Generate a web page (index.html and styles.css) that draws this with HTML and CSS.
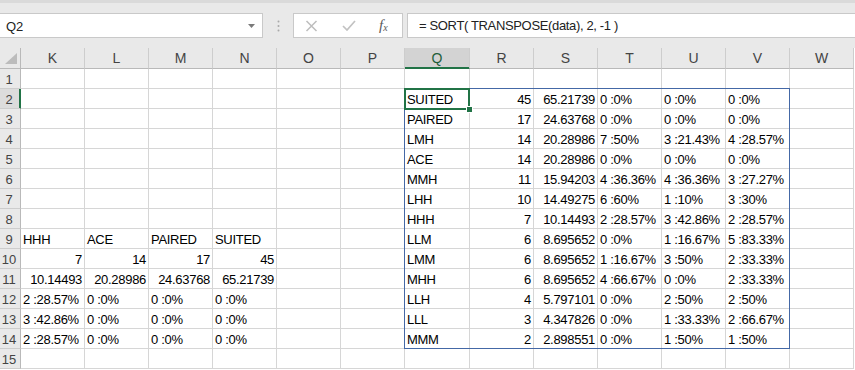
FILE: index.html
```html
<!DOCTYPE html>
<html lang="en">
<head>
  <meta charset="UTF-8" />
  <title>Sheet1 - Excel</title>
  <link rel="stylesheet" href="styles.css">
</head>
<body>
  <!-- formula bar -->
  <div class="formula-bar">
    <div class="name-box">
      <span>Q2</span>
      <svg class="drop-arrow" width="7" height="4" viewBox="0 0 7 4"><polygon points="0,0 7,0 3.5,4" fill="#7a7a7a"/></svg>
    </div>
    <svg class="grip" width="3" height="12" viewBox="0 0 3 12">
      <circle cx="1.5" cy="1.5" r="1" fill="#a9a9a9"/>
      <circle cx="1.5" cy="6" r="1" fill="#a9a9a9"/>
      <circle cx="1.5" cy="10.5" r="1" fill="#a9a9a9"/>
    </svg>
    <div class="fx-box">
      <svg class="btn-cancel" width="13" height="12" viewBox="0 0 13 12">
        <path d="M1.5 1 L11.5 11 M11.5 1 L1.5 11" stroke="#bdbdbd" stroke-width="1.5" fill="none"/>
      </svg>
      <svg class="btn-enter" width="14" height="11" viewBox="0 0 14 11">
        <path d="M1 6 L5 10 L13 1" stroke="#c2c2c2" stroke-width="1.7" fill="none"/>
      </svg>
      <span class="fx"><i>f</i><sub>x</sub></span>
    </div>
    <div class="formula">= SORT( TRANSPOSE(data), 2, -1 )</div>
  </div>

  <!-- grid -->
  <div class="sheet-wrap">
    <table class="sheet">
      <colgroup>
        <col class="col-rh">
        <col><col><col><col><col><col>
        <col class="col-q">
        <col><col><col><col><col><col>
      </colgroup>
      <tr class="head-row">
        <th class="corner"><svg width="20" height="20" viewBox="0 0 20 20"><polygon points="5,16 17,16 17,5" fill="#bcbcbc"/></svg></th>
        <th>K</th><th>L</th><th>M</th><th>N</th><th>O</th><th>P</th>
        <th class="sel">Q</th>
        <th>R</th><th>S</th><th>T</th><th>U</th><th>V</th><th>W</th>
      </tr>
      <tr>
        <th class="rh">1</th>
        <td></td><td></td><td></td><td></td><td></td><td></td>
        <td></td><td></td><td></td><td></td><td></td><td></td><td></td>
      </tr>
      <tr>
        <th class="rh sel">2</th>
        <td></td><td></td><td></td><td></td><td></td><td></td>
        <td>SUITED</td><td class="n">45</td><td class="n">65.21739</td><td>0 :0%</td><td>0 :0%</td><td>0 :0%</td><td></td>
      </tr>
      <tr>
        <th class="rh">3</th>
        <td></td><td></td><td></td><td></td><td></td><td></td>
        <td>PAIRED</td><td class="n">17</td><td class="n">24.63768</td><td>0 :0%</td><td>0 :0%</td><td>0 :0%</td><td></td>
      </tr>
      <tr>
        <th class="rh">4</th>
        <td></td><td></td><td></td><td></td><td></td><td></td>
        <td>LMH</td><td class="n">14</td><td class="n">20.28986</td><td>7 :50%</td><td>3 :21.43%</td><td>4 :28.57%</td><td></td>
      </tr>
      <tr>
        <th class="rh">5</th>
        <td></td><td></td><td></td><td></td><td></td><td></td>
        <td>ACE</td><td class="n">14</td><td class="n">20.28986</td><td>0 :0%</td><td>0 :0%</td><td>0 :0%</td><td></td>
      </tr>
      <tr>
        <th class="rh">6</th>
        <td></td><td></td><td></td><td></td><td></td><td></td>
        <td>MMH</td><td class="n">11</td><td class="n">15.94203</td><td>4 :36.36%</td><td>4 :36.36%</td><td>3 :27.27%</td><td></td>
      </tr>
      <tr>
        <th class="rh">7</th>
        <td></td><td></td><td></td><td></td><td></td><td></td>
        <td>LHH</td><td class="n">10</td><td class="n">14.49275</td><td>6 :60%</td><td>1 :10%</td><td>3 :30%</td><td></td>
      </tr>
      <tr>
        <th class="rh">8</th>
        <td></td><td></td><td></td><td></td><td></td><td></td>
        <td>HHH</td><td class="n">7</td><td class="n">10.14493</td><td>2 :28.57%</td><td>3 :42.86%</td><td>2 :28.57%</td><td></td>
      </tr>
      <tr>
        <th class="rh">9</th>
        <td>HHH</td><td>ACE</td><td>PAIRED</td><td>SUITED</td><td></td><td></td>
        <td>LLM</td><td class="n">6</td><td class="n">8.695652</td><td>0 :0%</td><td>1 :16.67%</td><td>5 :83.33%</td><td></td>
      </tr>
      <tr>
        <th class="rh">10</th>
        <td class="n">7</td><td class="n">14</td><td class="n">17</td><td class="n">45</td><td></td><td></td>
        <td>LMM</td><td class="n">6</td><td class="n">8.695652</td><td>1 :16.67%</td><td>3 :50%</td><td>2 :33.33%</td><td></td>
      </tr>
      <tr>
        <th class="rh">11</th>
        <td class="n">10.14493</td><td class="n">20.28986</td><td class="n">24.63768</td><td class="n">65.21739</td><td></td><td></td>
        <td>MHH</td><td class="n">6</td><td class="n">8.695652</td><td>4 :66.67%</td><td>0 :0%</td><td>2 :33.33%</td><td></td>
      </tr>
      <tr>
        <th class="rh">12</th>
        <td>2 :28.57%</td><td>0 :0%</td><td>0 :0%</td><td>0 :0%</td><td></td><td></td>
        <td>LLH</td><td class="n">4</td><td class="n">5.797101</td><td>0 :0%</td><td>2 :50%</td><td>2 :50%</td><td></td>
      </tr>
      <tr>
        <th class="rh">13</th>
        <td>3 :42.86%</td><td>0 :0%</td><td>0 :0%</td><td>0 :0%</td><td></td><td></td>
        <td>LLL</td><td class="n">3</td><td class="n">4.347826</td><td>0 :0%</td><td>1 :33.33%</td><td>2 :66.67%</td><td></td>
      </tr>
      <tr>
        <th class="rh">14</th>
        <td>2 :28.57%</td><td>0 :0%</td><td>0 :0%</td><td>0 :0%</td><td></td><td></td>
        <td>MMM</td><td class="n">2</td><td class="n">2.898551</td><td>0 :0%</td><td>1 :50%</td><td>1 :50%</td><td></td>
      </tr>
      <tr>
        <th class="rh">15</th>
        <td></td><td></td><td></td><td></td><td></td><td></td>
        <td></td><td></td><td></td><td></td><td></td><td></td><td></td>
      </tr>
    </table>

    <!-- spill range + active cell, drawn over the grid -->
    <div class="spill"></div>
    <div class="active-cell"><span class="fill-handle"></span></div>
  </div>
</body>
</html>
```

FILE: styles.css
```css
html, body {
  margin: 0;
  padding: 0;
  overflow: hidden;
  background: #ffffff;
  font-family: "Liberation Sans", Arial, sans-serif;
  color: #000;
}

/* formula bar */
.formula-bar {
  display: flex;
  align-items: flex-start;
  height: 48px;
  box-sizing: border-box;
  padding-top: 10px;
  background: #e9e9e9;
  border-top: 3px solid #dadada;
}

.name-box {
  display: flex;
  align-items: center;
  justify-content: space-between;
  width: 263px;
  height: 25px;
  box-sizing: border-box;
  padding: 0 7px 0 6px;
  background: #fff;
  border: 1px solid #c9c9c9;
  border-left: none;
  font-size: 13px;
  color: #222;
}

.name-box span {
  padding-top: 1px;
}

.grip {
  margin: 7px 13px 0 14px;
}

.fx-box {
  display: flex;
  align-items: center;
  width: 110px;
  height: 25px;
  box-sizing: border-box;
  padding-left: 11px;
  background: #fff;
  border: 1px solid #c9c9c9;
}

.btn-enter {
  margin-left: 24px;
}

.fx {
  margin-left: 23px;
  font-family: "Liberation Serif", serif;
  font-size: 15px;
  color: #5a5a5a;
}

.fx sub {
  font-size: 10px;
  font-style: italic;
  vertical-align: -1px;
}

.formula {
  flex: 1;
  height: 25px;
  margin-left: 4px;
  box-sizing: border-box;
  padding: 1px 0 0 11px;
  background: #fff;
  border: 1px solid #c9c9c9;
  border-right: none;
  font-size: 13px;
  line-height: 22px;
  letter-spacing: -0.35px;
  color: #222;
  white-space: nowrap;
}

/* grid */
.sheet-wrap {
  position: relative;
}

.sheet {
  border-collapse: separate;
  border-spacing: 0;
  table-layout: fixed;
  width: 854px;
}

.sheet col { width: 64px; }
.sheet col.col-rh { width: 21px; }
.sheet col.col-q { width: 65px; }

.sheet tr {
  height: 20px;
}

.sheet td {
  box-sizing: border-box;
  padding: 3px 2px 0 2px;
  border-right: 1px solid #d6d6d6;
  border-bottom: 1px solid #d6d6d6;
  font-size: 13px;
  line-height: 15px;
  letter-spacing: -0.3px;
  vertical-align: top;
  white-space: nowrap;
  overflow: hidden;
}

.sheet td.n {
  text-align: right;
}

.head-row {
  height: 21px;
}

.head-row th {
  box-sizing: border-box;
  padding: 0;
  background: #e9e9e9;
  border-right: 1px solid #cdcdcd;
  border-bottom: 1px solid #b9b9b9;
  font-size: 14px;
  font-weight: normal;
  line-height: 20px;
  color: #444;
  vertical-align: top;
}

.head-row th.corner {
  border-right-color: #b9b9b9;
}

.head-row th.corner svg {
  display: block;
}

.head-row th.sel {
  background: #d3d3d3;
  color: #1f5e3a;
  border-bottom-color: #217346;
  box-shadow: inset 0 -1px 0 #217346;
}

.sheet th.rh {
  box-sizing: border-box;
  padding: 3px 2px 0 0;
  background: #e9e9e9;
  border-right: 1px solid #b9b9b9;
  border-bottom: 1px solid #cdcdcd;
  font-size: 13px;
  font-weight: normal;
  line-height: 15px;
  color: #444;
  text-align: center;
  vertical-align: top;
}

.sheet th.rh.sel {
  background: #dcdcdc;
  border-right-color: #217346;
  box-shadow: inset -1px 0 0 #217346;
}

.spill {
  position: absolute;
  left: 404px;
  top: 40px;
  width: 386px;
  height: 261px;
  box-sizing: border-box;
  border: 1px solid #4468a6;
  pointer-events: none;
}

.active-cell {
  position: absolute;
  left: 404px;
  top: 40px;
  width: 66px;
  height: 22px;
  box-sizing: border-box;
  border: 2px solid #217346;
}

.fill-handle {
  position: absolute;
  right: -5px;
  bottom: -5px;
  width: 5px;
  height: 5px;
  background: #217346;
  border: 1px solid #fff;
}
```
